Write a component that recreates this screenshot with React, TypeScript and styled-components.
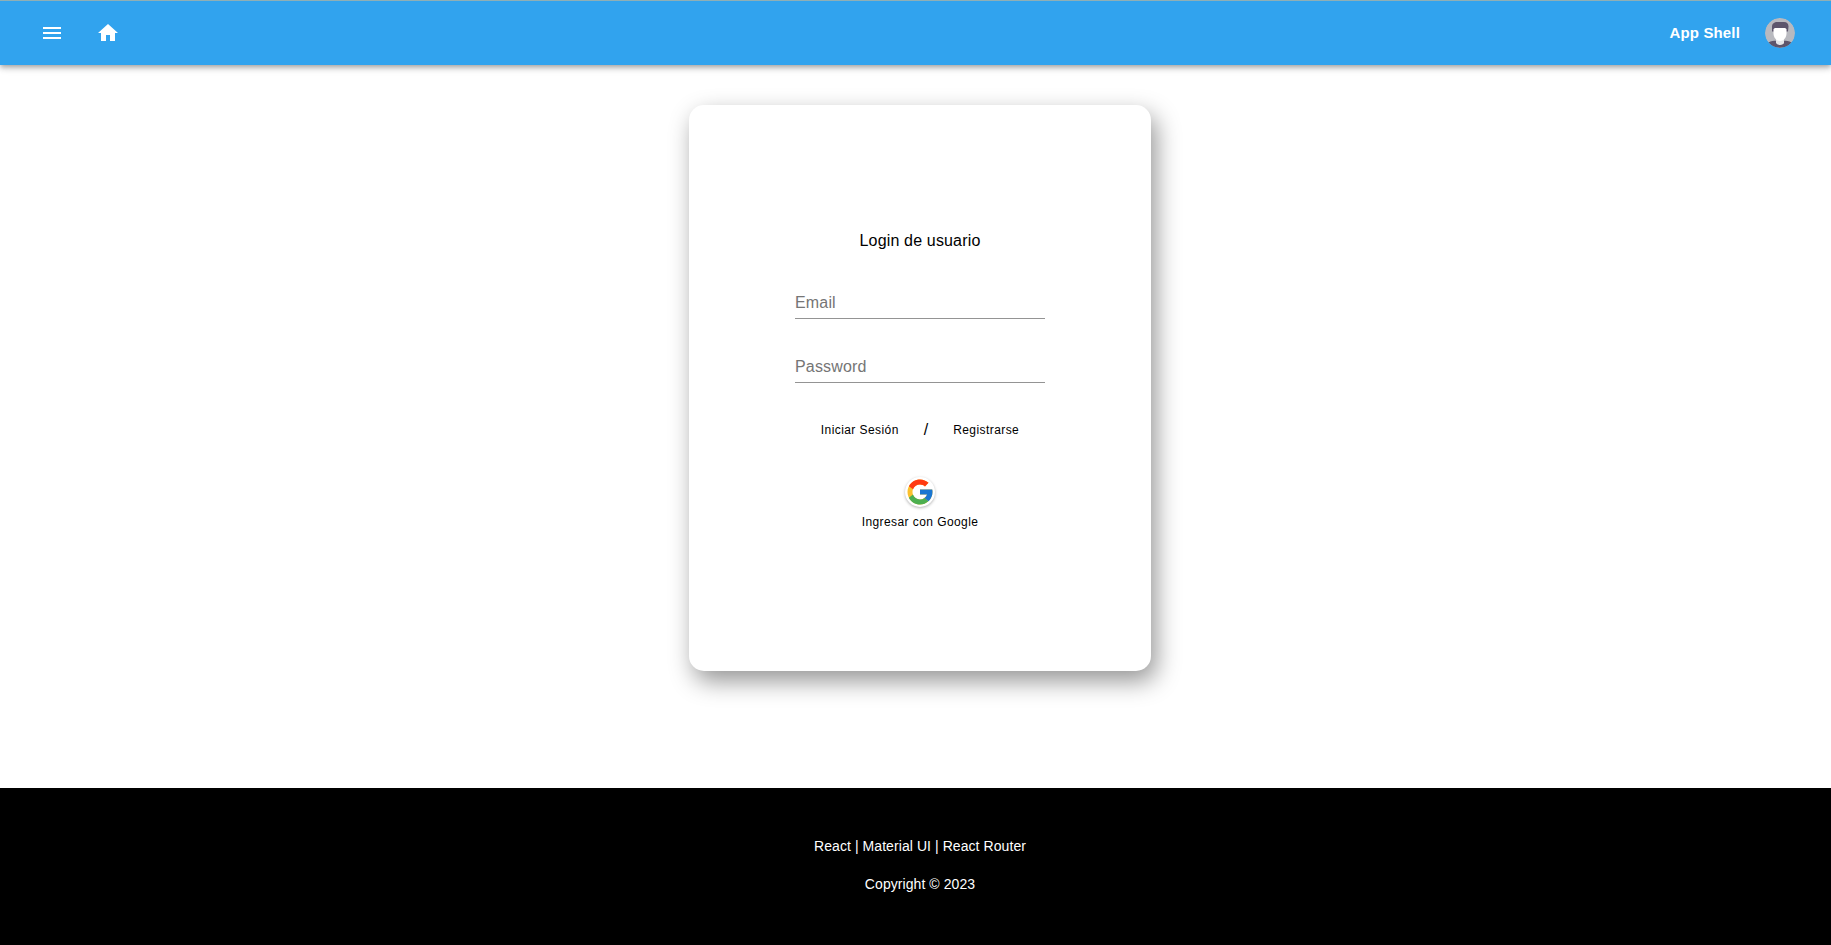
import React from "react";
import styled, { createGlobalStyle } from "styled-components";

const GlobalStyle = createGlobalStyle`
  *, *::before, *::after { box-sizing: border-box; }
  body {
    margin: 0;
    background: #fff;
    color: #000;
    font-family: "Liberation Sans", Arial, sans-serif;
    font-size: 16px;
    line-height: 24px;
  }
`;

const Page = styled.div`
  display: flex;
  flex-direction: column;
  min-height: 100vh;
`;

const AppBar = styled.header`
  display: flex;
  align-items: center;
  justify-content: space-between;
  height: 65px;
  padding: 0 36px 0 32px;
  border-top: 1px solid #8fafb5;
  background: #31a3ee;
  color: #fff;
  box-shadow: 0 2px 4px -1px rgba(0, 0, 0, 0.2), 0 4px 5px 0 rgba(0, 0, 0, 0.14),
    0 1px 10px 0 rgba(0, 0, 0, 0.12);
`;

const Group = styled.div<{ $gap: number }>`
  display: flex;
  align-items: center;
  gap: ${({ $gap }) => $gap}px;
`;

const PlainButton = styled.button`
  padding: 0;
  border: 0;
  background: none;
  color: inherit;
  font: inherit;
  cursor: pointer;
`;

const IconButton = styled(PlainButton)`
  display: flex;
  padding: 8px;
  border-radius: 50%;
`;

const Brand = styled.span`
  font-size: 15px;
  font-weight: 700;
  letter-spacing: 0.01em;
`;

const AvatarButton = styled(PlainButton)`
  display: flex;
  border-radius: 50%;
  overflow: hidden;
`;

const Main = styled.main`
  flex: 1;
  display: flex;
  justify-content: center;
  align-items: flex-start;
  padding: 40px 0 116px 9px;
`;

const Card = styled.form`
  display: flex;
  flex-direction: column;
  align-items: center;
  width: 100%;
  max-width: 462px;
  padding: 124px 24px 139px;
  border-radius: 15px;
  background: #fff;
  box-shadow: 5px 10px 24px rgba(0, 0, 0, 0.42);
`;

const Title = styled.h1`
  margin: 0 0 34px;
  font-size: 16px;
  font-weight: 400;
  letter-spacing: 0.01em;
`;

const Field = styled.input`
  width: 100%;
  max-width: 250px;
  height: 32px;
  margin-bottom: 32px;
  padding: 5px 0;
  border: 0;
  border-bottom: 1px solid #949494;
  border-radius: 0;
  outline: 0;
  background: none;
  color: inherit;
  font: inherit;
  letter-spacing: 0.01em;

  &::placeholder {
    color: #757575;
    opacity: 1;
  }
`;

const Actions = styled(Group)`
  margin: 3px 0 35px;
`;

const TextButton = styled(PlainButton)`
  font-size: 12px;
  line-height: 20px;
  letter-spacing: 0.035em;
`;

const GoogleButton = styled(TextButton)`
  display: flex;
  flex-direction: column;
  align-items: center;
  gap: 5px;
`;

const GoogleBadge = styled.span`
  display: flex;
  align-items: center;
  justify-content: center;
  width: 30px;
  height: 30px;
  border-radius: 50%;
  background: #fff;
  box-shadow: 0 1px 3px rgba(0, 0, 0, 0.3);
`;

const Footer = styled.footer`
  display: flex;
  flex-direction: column;
  align-items: center;
  gap: 18px;
  padding: 48px 0 51px 9px;
  background: #000;
  color: #fff;
  font-size: 14px;
  line-height: 20px;
`;

const FooterText = styled.p`
  margin: 0;
  letter-spacing: 0.005em;
`;

const MenuIcon = () => (
  <svg width="24" height="24" viewBox="0 0 24 24" fill="currentColor" aria-hidden="true">
    <path d="M3 18h18v-2H3v2zm0-5h18v-2H3v2zm0-7v2h18V6H3z" />
  </svg>
);

const HomeIcon = () => (
  <svg width="24" height="24" viewBox="0 0 24 24" fill="currentColor" aria-hidden="true">
    <path d="M10 20v-6h4v6h5v-8h3L12 3 2 12h3v8z" />
  </svg>
);

const Avatar = () => (
  <svg width="30" height="30" viewBox="0 0 30 30" aria-hidden="true">
    <circle cx="15" cy="15" r="15" fill="#b8b9bf" />
    <path d="M3.5 24.5C6 23 9 22.8 11 22.8h8c2 0 5 .2 7.500 1.700A15 15 0 0 1 3.500 24.500z" fill="#5d556c" />
    <path d="M11 20h8v4.500c0 1.500-2 2.500-4 2.500s-4-1-4-2.500z" fill="#e6e6e8" />
    <path d="M7 13.500V8.500C7 5.500 9.500 4 12 4h7c3 0 4.500 2 4.500 4.500l-.5 5z" fill="#5d556c" />
    <path d="M8.500 11.500c.5-1 1-1.500 2-1.500h9c1 0 1.500.500 2 1.500v4c0 4-3 7.500-6.500 7.500s-6.500-3.500-6.500-7.500z" fill="#fff" />
  </svg>
);

const GoogleIcon = () => (
  <svg width="30" height="30" viewBox="0 0 48 48" aria-hidden="true">
    <path fill="#FBC02D" d="M43.611 20.083H42V20H24v8h11.303c-1.649 4.657-6.080 8-11.303 8-6.627 0-12-5.373-12-12s5.373-12 12-12c3.059 0 5.842 1.154 7.961 3.039l5.657-5.657C34.046 6.053 29.268 4 24 4 12.955 4 4 12.955 4 24s8.955 20 20 20 20-8.955 20-20c0-1.341-.138-2.650-.389-3.917z" />
    <path fill="#FF3A12" d="M6.306 14.691l6.571 4.819C14.655 15.108 18.961 12 24 12c3.059 0 5.842 1.154 7.961 3.039l5.657-5.657C34.046 6.053 29.268 4 24 4 16.318 4 9.656 8.337 6.306 14.691z" />
    <path fill="#4CAF50" d="M24 44c5.166 0 9.860-1.977 13.409-5.192l-6.190-5.238A11.910 11.910 0 0 1 24 36c-5.202 0-9.619-3.317-11.283-7.946l-6.522 5.025C9.505 39.556 16.227 44 24 44z" />
    <path fill="#1976D2" d="M43.611 20.083H42V20H24v8h11.303a12.040 12.040 0 0 1-4.087 5.571l.003-.002 6.190 5.238C36.971 39.205 44 34 44 24c0-1.341-.138-2.650-.389-3.917z" />
  </svg>
);

export default function App() {
  return (
    <Page>
      <GlobalStyle />
      <AppBar>
        <Group $gap={16}>
          <IconButton type="button" aria-label="Menú">
            <MenuIcon />
          </IconButton>
          <IconButton type="button" aria-label="Inicio">
            <HomeIcon />
          </IconButton>
        </Group>
        <Group $gap={25}>
          <Brand>App Shell</Brand>
          <AvatarButton type="button" aria-label="Cuenta">
            <Avatar />
          </AvatarButton>
        </Group>
      </AppBar>
      <Main>
        <Card onSubmit={(e) => e.preventDefault()}>
          <Title>Login de usuario</Title>
          <Field type="email" placeholder="Email" aria-label="Email" />
          <Field type="password" placeholder="Password" aria-label="Password" />
          <Actions $gap={25}>
            <TextButton type="submit">Iniciar Sesión</TextButton>
            <span>/</span>
            <TextButton type="button">Registrarse</TextButton>
          </Actions>
          <GoogleButton type="button">
            <GoogleBadge>
              <GoogleIcon />
            </GoogleBadge>
            Ingresar con Google
          </GoogleButton>
        </Card>
      </Main>
      <Footer>
        <FooterText>React | Material UI | React Router</FooterText>
        <FooterText>Copyright © 2023</FooterText>
      </Footer>
    </Page>
  );
}
